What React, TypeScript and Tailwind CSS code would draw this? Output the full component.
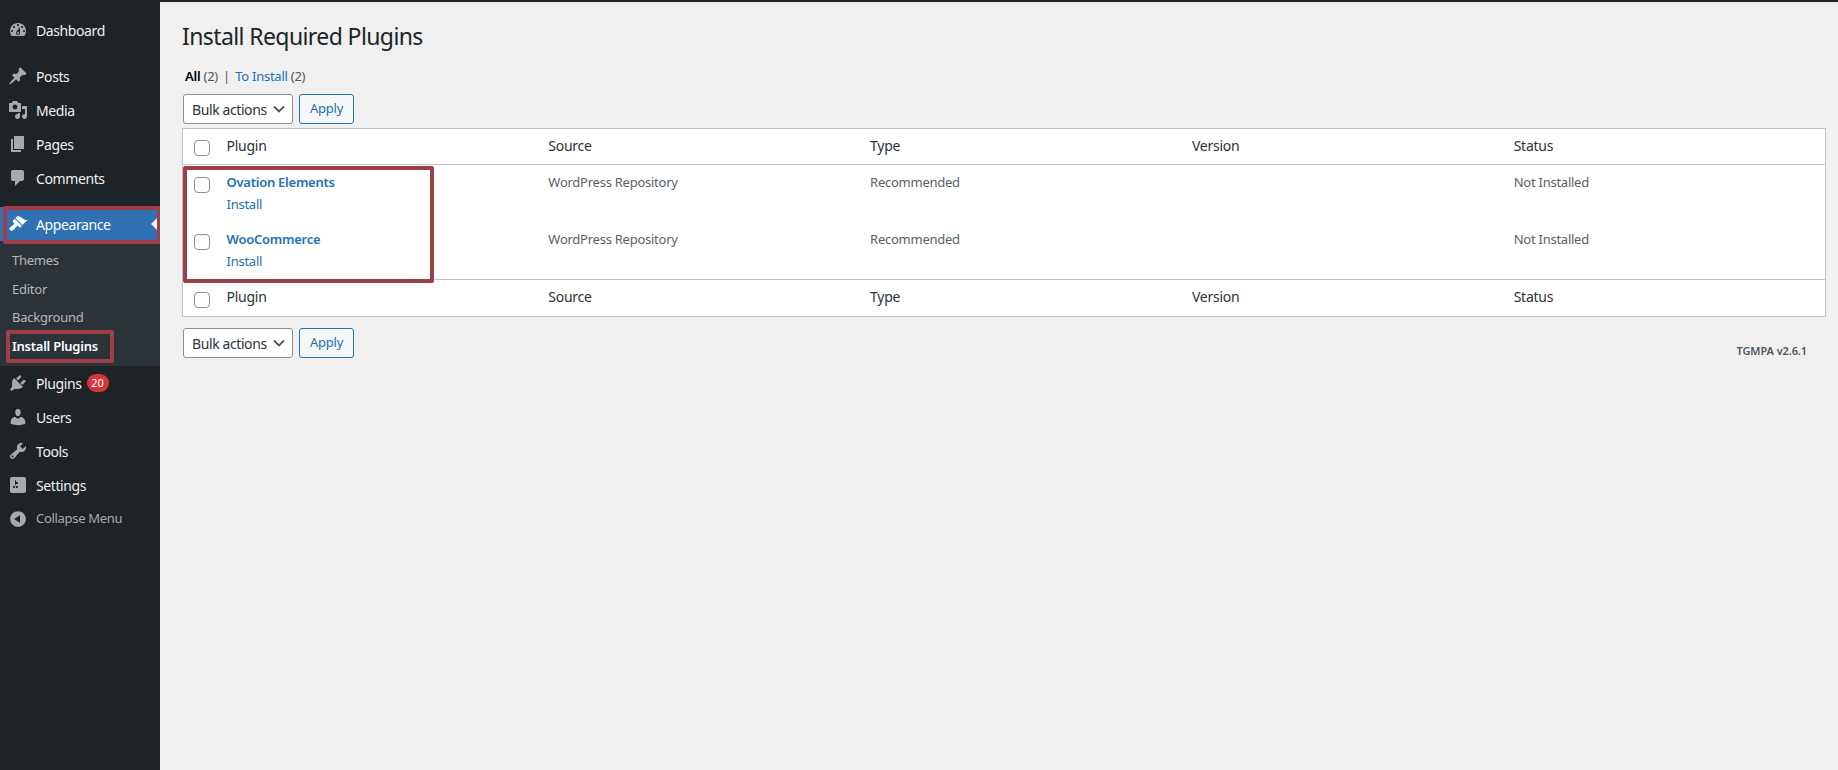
const FONT = "font-['Noto_Sans','Open_Sans',sans-serif]";

const ICONS: Record<string, string> = {
  dashboard:
    "M3.76 16h12.48c1.1-1.37 1.76-3.11 1.76-5 0-4.42-3.58-8-8-8s-8 3.58-8 8c0 1.89.66 3.63 1.76 5zM10 4c.55 0 1 .45 1 1s-.45 1-1 1-1-.45-1-1 .45-1 1-1zM6 6c.55 0 1 .45 1 1s-.45 1-1 1-1-.45-1-1 .45-1 1-1zm8 0c.55 0 1 .45 1 1s-.45 1-1 1-1-.45-1-1 .45-1 1-1zm-5.37 5.55L12 7v6c0 1.1-.9 2-2 2s-2-.9-2-2c0-.57.24-1.08.63-1.45zM4 10c.55 0 1 .45 1 1s-.45 1-1 1-1-.45-1-1 .45-1 1-1zm12 0c.55 0 1 .45 1 1s-.45 1-1 1-1-.45-1-1 .45-1 1-1zm-5 3c0-.55-.45-1-1-1s-1 .45-1 1 .45 1 1 1 1-.45 1-1z",
  posts:
    "M10.44 3.02l1.82-1.82 6.36 6.35-1.83 1.82c-1.05-.68-2.48-.57-3.41.36l-.75.75c-.92.93-1.04 2.35-.35 3.41l-1.83 1.82-2.41-2.41-2.8 2.79c-.42.42-3.38 2.71-3.8 2.29s1.86-3.39 2.28-3.81l2.79-2.79L4.1 9.36l1.83-1.82c1.05.69 2.48.57 3.4-.36l.75-.75c.93-.92 1.05-2.35.36-3.41z",
  media:
    "M13 11V4c0-.55-.45-1-1-1h-1.67L9 1H5L3.67 3H2c-.55 0-1 .45-1 1v7c0 .55.45 1 1 1h10c.55 0 1-.45 1-1zM7 4.5c1.38 0 2.5 1.12 2.5 2.5S8.38 9.5 7 9.5 4.5 8.38 4.5 7 5.62 4.5 7 4.5zM14 6h5v10.5c0 1.38-1.12 2.5-2.5 2.5S14 17.88 14 16.5s1.12-2.5 2.5-2.5c.17 0 .34.02.5.05V9h-3V6zm-4 8.05V13h2v3.5c0 1.38-1.12 2.5-2.5 2.5S7 17.88 7 16.5 8.12 14 9.5 14c.17 0 .34.02.5.05z",
  pages: "M6 15V2h10v13H6zm-1 1h8v2H3V5h2v11z",
  comments:
    "M5 2h9c1.1 0 2 .9 2 2v7c0 1.1-.9 2-2 2h-2l-5 5v-5H5c-1.1 0-2-.9-2-2V4c0-1.1.9-2 2-2z",
  appearance:
    "M14.48 11.06L7.41 3.99l1.5-1.5c.5-.56 2.3-.47 3.51.32 1.21.8 1.43 1.28 2.91 2.1 1.18.64 2.45 1.26 4.45.85zm-.71.71L6.7 4.7 4.93 6.47c-.39.39-.39 1.02 0 1.41l1.06 1.06c.39.39.39 1.03 0 1.42-.6.6-1.43 1.11-2.21 1.69-.35.26-.7.53-1.01.84C1.43 13.23.76 14.89 2 16.12c1.24 1.24 2.9.57 4.24-.75.31-.31.58-.66.85-1.01.58-.78 1.09-1.61 1.69-2.21.39-.39 1.02-.39 1.41 0l1.06 1.06c.39.39 1.02.39 1.41 0z",
  plugins:
    "M13.11 4.36L9.87 7.6 8 5.73l3.24-3.24c.35-.34 1.05-.2 1.56.32.52.51.66 1.21.31 1.55zm-8 1.77l.91-1.12 9.01 9.01-1.19.84c-.71.71-2.63 1.16-3.82 1.16H6.14L4.9 17.26c-.59.59-1.54.59-2.12 0-.59-.58-.59-1.53 0-2.12l1.24-1.24v-3.88c0-1.13.4-3.19 1.09-3.89zm7.26 3.97l3.24-3.24c.34-.35 1.04-.21 1.55.31.52.51.66 1.21.31 1.55l-3.24 3.25z",
  users:
    "M10 9.25c-2.27 0-2.73-3.44-2.73-3.44C7 4.02 7.82 2 9.97 2c2.16 0 2.98 2.02 2.71 3.81 0 0-.41 3.44-2.68 3.44zm0 2.57L12.72 10c2.39 0 4.52 2.33 4.52 4.53v2.49s-3.65 1.13-7.24 1.13c-3.65 0-7.24-1.13-7.24-1.13v-2.49c0-2.25 1.94-4.48 4.47-4.48z",
  tools:
    "M16.68 9.77c-1.34 1.34-3.3 1.67-4.95.99l-5.41 6.52c-.99.99-2.59.99-3.58 0s-.99-2.59 0-3.57l6.52-5.42c-.68-1.65-.35-3.61.99-4.95 1.28-1.28 3.12-1.62 4.72-1.06l-2.89 2.89 2.82 2.82 2.86-2.87c.53 1.58.18 3.39-1.08 4.65zM3.81 16.21c.4.39 1.04.39 1.43 0 .4-.4.4-1.04 0-1.43-.39-.4-1.03-.4-1.43 0-.39.39-.39 1.03 0 1.43z",
  settings:
    "M18 16V4c0-1.1-.9-2-2-2H4c-1.1 0-2 .9-2 2v12c0 1.1.9 2 2 2h12c1.1 0 2-.9 2-2zM8 11h1c.55 0 1 .45 1 1s-.45 1-1 1H8v1.5c0 .28-.22.5-.5.5s-.5-.22-.5-.5V13H6c-.55 0-1-.45-1-1s.45-1 1-1h1V5.5c0-.28.22-.5.5-.5s.5.22.5.5V7h1c.55 0 1 .45 1 1s-.45 1-1 1h-1v5.5c0 .28-.22.5-.5.5s-.5-.22-.5-.5V9z",
  collapse:
    "M10 2.16c4.33 0 7.84 3.51 7.84 7.84s-3.51 7.84-7.84 7.84S2.16 14.33 2.16 10 5.71 2.16 10 2.16zm2 11.72V6.12L6.18 9.97z",
};

function Dashicon({ name, className }: { name: string; className?: string }) {
  return (
    <svg viewBox="0 0 20 20" fill="currentColor" className={className}>
      <path d={ICONS[name]} />
    </svg>
  );
}

function MenuItem({ icon, label, badge }: { icon: string; label: string; badge?: string }) {
  return (
    <div className="flex h-[34px] items-center text-[14px] tracking-[-0.4px] text-[#f0f0f1]">
      <Dashicon name={icon} className="ml-2 mr-2 h-5 w-5 text-[#a7aaad]" />
      <span>{label}</span>
      {badge && (
        <span className="ml-[5px] flex h-[18px] min-w-[22px] items-center justify-center rounded-full bg-[#d63638] px-[4px] text-[11px] tracking-normal text-white">
          {badge}
        </span>
      )}
    </div>
  );
}

function Sidebar() {
  return (
    <aside className="relative w-[160px] shrink-0 bg-[#1d2327] pt-[13px]">
      <MenuItem icon="dashboard" label="Dashboard" />
      <div className="h-3" />
      <MenuItem icon="posts" label="Posts" />
      <MenuItem icon="media" label="Media" />
      <MenuItem icon="pages" label="Pages" />
      <MenuItem icon="comments" label="Comments" />
      <div className="h-3" />
      <div className="relative flex h-[34px] items-center bg-[#2f71b2] text-[14px] tracking-[-0.4px] text-white">
        <Dashicon name="appearance" className="ml-2 mr-2 h-5 w-5 text-white" />
        <span>Appearance</span>
        <span className="absolute right-[3px] top-[11px] h-0 w-0 border-y-[6px] border-r-[6px] border-y-transparent border-r-[#f0f0f1]" />
      </div>
      <div className="bg-[#2c3338] py-[5.5px] text-[13px] tracking-[-0.25px] text-[#f0f0f1]/70">
        <div className="flex h-[28.5px] items-center pl-3">Themes</div>
        <div className="flex h-[28.5px] items-center pl-3">Editor</div>
        <div className="flex h-[28.5px] items-center pl-3">Background</div>
        <div className="flex h-[28.5px] items-center pl-3 font-semibold text-white">Install Plugins</div>
      </div>
      <MenuItem icon="plugins" label="Plugins" badge="20" />
      <MenuItem icon="users" label="Users" />
      <MenuItem icon="tools" label="Tools" />
      <MenuItem icon="settings" label="Settings" />
      <div className="flex h-[34px] items-center text-[13px] tracking-[-0.3px] text-[#a7aaad]">
        <Dashicon name="collapse" className="ml-2 mr-2 h-5 w-5" />
        <span>Collapse Menu</span>
      </div>

      <div className="absolute left-[3px] top-[206px] h-[38px] w-[158px] rounded-[2px] border-[4px] border-[#9e3f47]" />
      <div className="absolute left-[6px] top-[330px] h-[33px] w-[108px] rounded-[2px] border-[4px] border-[#9e3f47]" />
    </aside>
  );
}

function Checkbox() {
  return <span className="block h-4 w-4 rounded-[4px] border border-[#8c8f94] bg-white" />;
}

function BulkBar() {
  return (
    <div className="flex gap-[6px] pl-[1px]">
      <div className="flex h-[30px] w-[110px] items-center justify-between rounded-[3px] border border-[#8c8f94] bg-white pl-[8px] pr-[3px] text-[14px] tracking-[-0.4px] text-[#2c3338]">
        <span className="whitespace-nowrap">Bulk actions</span>
        <svg viewBox="0 0 20 20" className="h-5 w-5 text-[#50575e]" fill="none" stroke="currentColor" strokeWidth="1.8">
          <path d="M5 7.5 10 12.5 15 7.5" />
        </svg>
      </div>
      <div className="flex h-[30px] w-[55px] items-center justify-center rounded-[3px] border border-[#2271b1] bg-[#f6f7f7] text-[13px] tracking-[-0.25px] text-[#2271b1]">
        Apply
      </div>
    </div>
  );
}

const COLUMNS = ["Plugin", "Source", "Type", "Version", "Status"];
const PLUGINS = ["Ovation Elements", "WooCommerce"];
const ROW_GRID = "grid grid-cols-[33px_repeat(5,minmax(0,1fr))]";

function HeaderRow({ className, labelClass }: { className: string; labelClass: string }) {
  return (
    <div className={`${ROW_GRID} items-center text-[14px] tracking-[-0.25px] text-[#2c3338] ${className}`}>
      <div className="pl-[11px] pt-[3px]">
        <Checkbox />
      </div>
      {COLUMNS.map((c) => (
        <div key={c} className={`pl-[10.5px] ${labelClass}`}>
          {c}
        </div>
      ))}
    </div>
  );
}

function PluginRow({ name }: { name: string }) {
  return (
    <div className={`${ROW_GRID} h-[57px] text-[13px] tracking-[-0.25px] text-[#5a6167]`}>
      <div className="pl-[11px] pt-[12px]">
        <Checkbox />
      </div>
      <div className="pl-[10.5px] pt-[8px]">
        <div className="font-semibold leading-[19px] text-[#2271b1]">{name}</div>
        <div className="mt-[3px] leading-[19px] text-[#2271b1]">Install</div>
      </div>
      <div className="pl-[10.5px] pt-[8px] leading-[19px]">WordPress Repository</div>
      <div className="pl-[10.5px] pt-[8px] leading-[19px]">Recommended</div>
      <div />
      <div className="pl-[10.5px] pt-[8px] leading-[19px]">Not Installed</div>
    </div>
  );
}

function Main() {
  return (
    <main className="relative min-w-0 flex-1 border-t-2 border-[#1d2327] bg-[#f0f0f1] pl-[22px] pr-[12px]">
      <h1 className="pt-[19px] text-[23px] leading-[30px] tracking-[-0.6px] text-[#1d2327]">Install Required Plugins</h1>
      <div className="mt-[16px] pl-[3px] text-[13px] leading-[18px] tracking-[-0.25px] text-[#50575e]">
        <span className="font-semibold text-black">All</span> (2) <span className="mx-[2px]">|</span>{" "}
        <span className="text-[#2271b1]">To Install</span> (2)
      </div>
      <div className="mt-[9px]">
        <BulkBar />
      </div>
      <div className="mt-[4px] border border-[#c3c4c7] bg-white">
        <HeaderRow className="h-[36px] border-b border-[#c3c4c7]" labelClass="pb-[2px]" />
        {PLUGINS.map((p) => (
          <PluginRow key={p} name={p} />
        ))}
        <HeaderRow className="h-[37px] border-t border-[#c3c4c7]" labelClass="pb-[4px]" />
      </div>
      <div className="mt-[11px] flex items-start justify-between">
        <BulkBar />
        <div className="mr-[19px] mt-[15px] text-[11px] font-semibold leading-4 tracking-[-0.1px] text-[#50575e]">TGMPA v2.6.1</div>
      </div>

      <div className="absolute left-[23px] top-[164px] h-[117px] w-[251px] rounded-[2px] border-[4px] border-[#9e3f47]" />
    </main>
  );
}

export default function App() {
  return (
    <div className={`flex h-[770px] w-full overflow-hidden ${FONT}`}>
      <Sidebar />
      <Main />
    </div>
  );
}
